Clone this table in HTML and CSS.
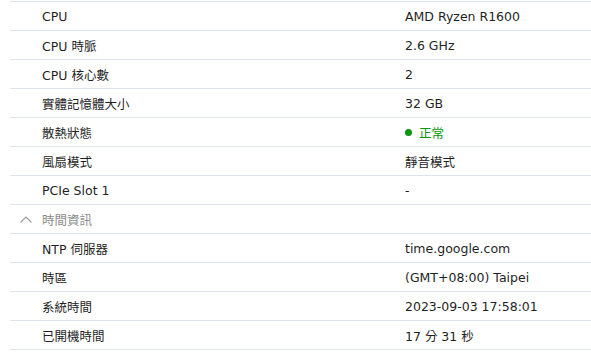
FILE: index.html
```html
<!DOCTYPE html>
<html lang="zh-Hant">
<head>
<meta charset="utf-8">
<link rel="stylesheet" href="styles.css">
</head>
<body>
<div class="panel">
  <div class="row"><span class="label">CPU</span><span class="value">AMD Ryzen R1600</span></div>
  <div class="row"><span class="label">CPU 時脈</span><span class="value">2.6 GHz</span></div>
  <div class="row"><span class="label">CPU 核心數</span><span class="value">2</span></div>
  <div class="row"><span class="label">實體記憶體大小</span><span class="value">32 GB</span></div>
  <div class="row"><span class="label">散熱狀態</span><span class="value ok"><span class="dot"></span>正常</span></div>
  <div class="row"><span class="label">風扇模式</span><span class="value">靜音模式</span></div>
  <div class="row"><span class="label">PCIe Slot 1</span><span class="value">-</span></div>
  <div class="row section">
    <span class="chev"><svg width="12" height="7" viewBox="0 0 12 7"><path d="M0.5 6.5 L6 1 L11.5 6.5" fill="none" stroke="#9a9a9a" stroke-width="1.1"/></svg></span>
    <span class="label">時間資訊</span>
  </div>
  <div class="row"><span class="label">NTP 伺服器</span><span class="value">time.google.com</span></div>
  <div class="row"><span class="label">時區</span><span class="value">(GMT+08:00) Taipei</span></div>
  <div class="row"><span class="label">系統時間</span><span class="value">2023-09-03 17:58:01</span></div>
  <div class="row last"><span class="label">已開機時間</span><span class="value">17 分 31 秒</span></div>
</div>
</body>
</html>
```
FILE: styles.css
```css
html, body {
  margin: 0;
  padding: 0;
  background: #ffffff;
}
body {
  font-family: "DejaVu Sans", "Noto Sans CJK TC", sans-serif;
  font-size: 12.5px;
  color: #1f1f1f;
}
.panel {
  padding: 1px 0 0 10px;
}
.row {
  display: flex;
  align-items: center;
  height: 28px;
  border-top: 1px solid #dfe4ea;
  padding-left: 32px;
}
.row.last {
  border-bottom: 1px solid #dfe4ea;
}
.label {
  width: 363px;
  flex: none;
  white-space: nowrap;
}
.value {
  display: flex;
  align-items: center;
  white-space: nowrap;
}
.ok {
  color: #0a960a;
}
.dot {
  width: 7px;
  height: 7px;
  border-radius: 50%;
  background: #0a960a;
  margin-right: 7px;
}
.section {
  padding-left: 10px;
}
.section .chev {
  width: 22px;
  display: flex;
  align-items: center;
}
.section .label {
  color: #8c8c8c;
}
```
